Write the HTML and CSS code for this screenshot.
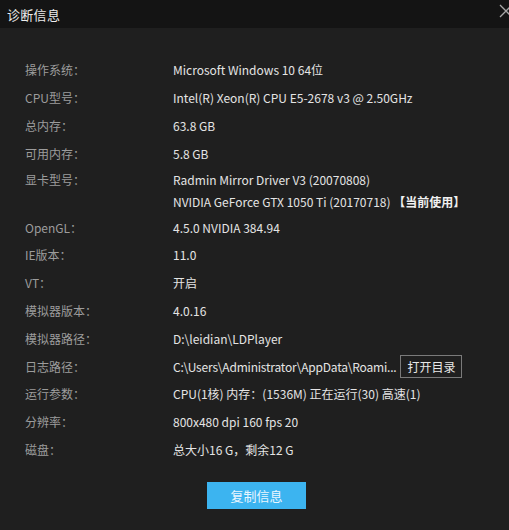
FILE: index.html
```html
<!DOCTYPE html>
<html lang="zh-CN">
<head>
<meta charset="utf-8">
<title>诊断信息</title>
<link rel="stylesheet" href="styles.css">
</head>
<body>
<div class="dialog">
  <header class="titlebar">
    <span class="title">诊断信息</span>
    <svg class="close" width="14" height="14" viewBox="0 0 14 14"><path d="M1 1 L13 13 M13 1 L1 13" stroke="#a8a8a8" stroke-width="1.3" fill="none"/></svg>
  </header>
  <main class="content">
    <div class="row"><span class="label">操作系统：</span><span class="value">Microsoft Windows 10 64位</span></div>
    <div class="row"><span class="label">CPU型号：</span><span class="value">Intel(R) Xeon(R) CPU E5-2678 v3 @ 2.50GHz</span></div>
    <div class="row"><span class="label">总内存：</span><span class="value">63.8 GB</span></div>
    <div class="row"><span class="label">可用内存：</span><span class="value">5.8 GB</span></div>
    <div class="row multi"><span class="label">显卡型号：</span><span class="value lines"><span>Radmin Mirror Driver V3 (20070808)</span><span>NVIDIA GeForce GTX 1050 Ti (20170718) <b>【当前使用】</b></span></span></div>
    <div class="row"><span class="label">OpenGL：</span><span class="value">4.5.0 NVIDIA 384.94</span></div>
    <div class="row"><span class="label">IE版本：</span><span class="value">11.0</span></div>
    <div class="row"><span class="label">VT：</span><span class="value">开启</span></div>
    <div class="row"><span class="label">模拟器版本：</span><span class="value">4.0.16</span></div>
    <div class="row"><span class="label">模拟器路径：</span><span class="value">D:\leidian\LDPlayer</span></div>
    <div class="row"><span class="label">日志路径：</span><span class="value path">C:\Users\Administrator\AppData\Roami...</span><button class="open-btn">打开目录</button></div>
    <div class="row"><span class="label">运行参数：</span><span class="value">CPU(1核) 内存：(1536M) 正在运行(30) 高速(1)</span></div>
    <div class="row"><span class="label">分辨率：</span><span class="value">800x480 dpi 160 fps 20</span></div>
    <div class="row"><span class="label">磁盘：</span><span class="value">总大小16 G，剩余12 G</span></div>
    <div class="actions"><button class="copy-btn">复制信息</button></div>
  </main>
</div>
</body>
</html>
```

FILE: styles.css
```css
html, body {
  margin: 0;
  padding: 0;
  background: #1f1f1f;
}
body {
  width: 509px;
  height: 530px;
  overflow: hidden;
  font-family: "Noto Sans CJK SC", "Noto Sans", sans-serif;
  font-size: 12px;
  color: #e4e4e4;
}
.dialog {
  display: flex;
  flex-direction: column;
  height: 530px;
}
.titlebar {
  position: relative;
  height: 28px;
  background: #141414;
  display: flex;
  align-items: center;
  padding-left: 7px;
}
.title {
  font-size: 13px;
  color: #ececec;
  letter-spacing: 0.3px;
}
.close {
  position: absolute;
  left: 499px;
  top: 4px;
}
.content {
  padding: 28.1px 0 0 25px;
  display: flex;
  flex-direction: column;
}
.row {
  display: flex;
  align-items: center;
  height: 27.8px;
}
.row.multi {
  height: auto;
  align-items: flex-start;
  padding-top: 2px;
}
.row.multi .label {
  line-height: 22px;
}
.label {
  width: 148px;
  flex: none;
  color: #9c9c9c;
}
.value {
  white-space: nowrap;
}
.lines {
  display: flex;
  flex-direction: column;
}
.lines > span {
  line-height: 22px;
}
.lines b {
  font-weight: bold;
  color: #f0f0f0;
}
.path {
  letter-spacing: -0.2px;
}
.open-btn {
  margin-left: 4px;
  height: 23px;
  width: 62px;
  padding: 0;
  border: 1px solid #7a7a7a;
  background: #1f1f1f;
  color: #e8e8e8;
  font-family: inherit;
  font-size: 12px;
}
.actions {
  display: flex;
  justify-content: center;
  margin: 18.5px 0 0 -21px;
}
.copy-btn {
  width: 99px;
  height: 27px;
  border: none;
  background: #3cb4f0;
  color: #e8f6ff;
  font-family: inherit;
  font-size: 13px;
  padding: 0;
}
```
